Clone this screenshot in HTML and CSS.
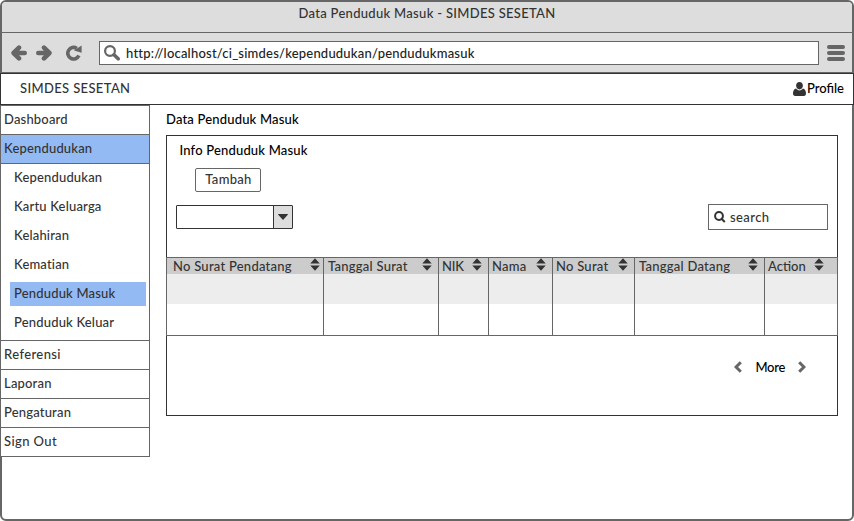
FILE: index.html
```html
<!DOCTYPE html>
<html lang="id">
<head>
<meta charset="utf-8">
<title>Data Penduduk Masuk - SIMDES SESETAN</title>
<link rel="stylesheet" href="styles.css">
</head>
<body>
<svg class="defs" width="0" height="0" aria-hidden="true">
  <symbol id="sort" viewBox="0 0 10 13"><path d="M5 0.3 9.7 5.6H0.3zM0.3 7.4H9.7L5 12.7z"/></symbol>
</svg>
<div class="window">
  <div class="titlebar">Data Penduduk Masuk - SIMDES SESETAN</div>
  <div class="toolbar">
    <svg class="nav-back" width="16" height="16" viewBox="0 0 16 16"><path d="M8 2.600 2.600 8l5.400 5.400M3 8h10.700"/></svg>
    <svg class="nav-forward" width="16" height="16" viewBox="0 0 16 16"><path d="M8 2.600 13.400 8l-5.400 5.400M13 8H2.300"/></svg>
    <svg class="nav-reload" width="17" height="16" viewBox="0 0 17 16"><path d="M11.800 3.400A5.800 5.800 0 1 0 13.900 10.600"/><path class="head" d="M16.600 0.600V7.800L9 5.600z"/></svg>
    <div class="address">
      <svg width="17" height="16" viewBox="0 0 17 16"><circle cx="6" cy="6" r="4.9"/><path d="M10 9.800 14.200 13.800"/></svg>
      <span class="url">http://localhost/ci_simdes/kependudukan/pendudukmasuk</span>
    </div>
    <div class="burger"><i></i><i></i><i></i></div>
  </div>
  <header class="header">
    <span class="brand">SIMDES SESETAN</span>
    <span class="profile"><svg width="13" height="14" viewBox="0 0 13 14"><path d="M6.5 0C8.6 0 9.9 1.5 9.9 3.6S8.500 7.500 6.500 7.500 3.100 5.700 3.100 3.600 4.400 0 6.500 0zM3.100 6.600C4 7.800 5 8.400 6.500 8.400S9 7.800 9.900 6.600C12 7 13 9 13 11.500 13 13 12.200 14 10.900 14H2.100C.8 14 0 13 0 11.500 0 9 1 7 3.100 6.600z"/></svg><span>Profile</span></span>
  </header>
  <div class="content">
    <nav class="sidebar">
      <a class="item">Dashboard</a>
      <a class="item active">Kependudukan</a>
      <div class="submenu">
        <a class="sub">Kependudukan</a>
        <a class="sub">Kartu Keluarga</a>
        <a class="sub">Kelahiran</a>
        <a class="sub">Kematian</a>
        <a class="sub selected">Penduduk Masuk</a>
        <a class="sub">Penduduk Keluar</a>
      </div>
      <a class="item wide">Referensi</a>
      <a class="item">Laporan</a>
      <a class="item">Pengaturan</a>
      <a class="item wide">Sign Out</a>
    </nav>
    <main class="main">
      <h1>Data Penduduk Masuk</h1>
      <section class="panel">
        <h2>Info Penduduk Masuk</h2>
        <button class="add">Tambah</button>
        <div class="filters">
          <div class="select"><span class="arrow"><svg width="10" height="6" viewBox="0 0 10 6"><path d="M0.500 0H9.500L10 .6 5 6 0 .6z"/></svg></span></div>
          <div class="search"><svg width="12" height="12" viewBox="0 0 12 12"><circle cx="5" cy="5" r="3.900"/><path d="M7 7.300 10.800 11"/></svg><span>search</span></div>
        </div>
        <div class="table">
          <div class="col"><div class="th"><span>No Surat Pendatang</span><svg><use href="#sort"/></svg></div></div>
          <div class="col"><div class="th"><span>Tanggal Surat</span><svg><use href="#sort"/></svg></div></div>
          <div class="col"><div class="th"><span>NIK</span><svg><use href="#sort"/></svg></div></div>
          <div class="col"><div class="th"><span>Nama</span><svg><use href="#sort"/></svg></div></div>
          <div class="col"><div class="th"><span>No Surat</span><svg><use href="#sort"/></svg></div></div>
          <div class="col"><div class="th"><span>Tanggal Datang</span><svg><use href="#sort"/></svg></div></div>
          <div class="col"><div class="th"><span>Action</span><svg><use href="#sort"/></svg></div></div>
        </div>
        <div class="pager">
          <svg width="8" height="12" viewBox="0 0 8 12"><path d="M6.800 1.200 2 6l4.800 4.800"/></svg>
          <span>More</span>
          <svg width="8" height="12" viewBox="0 0 8 12"><path d="M1.200 1.200 6 6l-4.800 4.800"/></svg>
        </div>
      </section>
    </main>
  </div>
</div>
</body>
</html>
```
FILE: styles.css
```css
* { box-sizing: border-box; }
body {
  margin: 0;
  background: #fff;
  color: #333;
  font: 500 13px/16px Lato, "Liberation Sans", sans-serif;
  letter-spacing: 0.18px;
  white-space: nowrap;
}
.defs { position: absolute; }
svg { display: block; flex: none; }
.window {
  width: 854px;
  height: 521px;
  border: 2px solid #666;
  border-radius: 6px;
  background: #fff;
}
.titlebar {
  height: 31px;
  padding-top: 3px;
  border-bottom: 1px solid #666;
  border-radius: 4px 4px 0 0;
  background: #ddd;
  text-align: center;
  letter-spacing: 0.3px;
}
.toolbar {
  display: flex;
  align-items: center;
  height: 40px;
  padding: 0 7px 0 9px;
  border-bottom: 1px solid #666;
  background: #ddd;
}
.toolbar > svg { fill: none; stroke: #666; stroke-width: 4.600; }
.nav-back, .nav-forward { stroke-linejoin: round; stroke-linecap: round; }
.nav-forward { margin-left: 9px; }
.nav-reload { margin-left: 13px; }
.toolbar > .nav-reload { stroke-width: 3.600; }
.nav-reload .head { fill: #666; stroke: none; }
.address {
  display: flex;
  align-items: center;
  width: 720px;
  height: 24px;
  margin-left: 17px;
  padding-left: 4px;
  border: 1px solid #666;
  background: #fff;
}
.address svg { fill: none; stroke: #666; stroke-width: 2.200; }
.address path { stroke-width: 3.600; stroke-linecap: round; }
.url { margin-left: 5px; color: #222; letter-spacing: 0.21px; }
.burger { display: grid; gap: 2px; width: 18px; margin-left: 8px; }
.burger i { height: 4px; border-radius: 2px; background: #666; }
.header {
  display: flex;
  justify-content: space-between;
  align-items: center;
  height: 32px;
  margin: 0 -2px;
  padding: 0 9px 2px 19px;
  border: 1px solid #333;
  background: #fff;
}
.brand { letter-spacing: 0.36px; }
.profile { display: flex; align-items: center; gap: 1px; color: #000; letter-spacing: 0; }
.profile svg { fill: #333; margin-top: 2px; }
.content { display: flex; align-items: flex-start; }
.sidebar {
  width: 150px;
  margin-left: -2px;
  border: 1px solid #666;
  background: #fff;
}
.item {
  display: block;
  height: 29px;
  padding: 5px 0 0 3px;
  border-bottom: 1px solid #666;
}
.item:last-child { border-bottom: 0; height: 28px; }
.wide { letter-spacing: 0.4px; }
.active { background: #94baf3; }
.submenu {
  display: grid;
  gap: 5px;
  height: 177px;
  align-content: start;
  padding: 2px 3px 0 9px;
  border-bottom: 1px solid #666;
}
.sub { height: 24px; padding: 3px 0 0 4px; }
.selected { background: #94baf3; }
.main { width: 672px; margin-left: 16px; color: #000; }
h1, h2 { margin: 0; font: inherit; }
h1 { padding-top: 6px; height: 30px; }
.panel { height: 281px; border: 1px solid #333; }
h2 { height: 32px; padding: 6px 0 0 12.500px; }
.add {
  display: block;
  width: 66px;
  height: 24px;
  margin-left: 28px;
  padding: 0 0 2px 1px;
  border: 1px solid #666;
  border-radius: 2px;
  background: #fff;
  color: #333;
  font: inherit;
  letter-spacing: 0.3px;
}
.filters {
  display: flex;
  justify-content: space-between;
  align-items: center;
  margin: 12px 9px 0;
}
.select {
  display: flex;
  justify-content: flex-end;
  width: 117px;
  height: 24px;
  border: 1px solid #333;
  border-radius: 1px;
}
.arrow {
  display: grid;
  place-items: center;
  width: 19px;
  border-left: 1px solid #333;
  background: #ddd;
}
.arrow svg { fill: #333; }
.search {
  display: flex;
  align-items: center;
  gap: 4px;
  width: 120px;
  height: 26px;
  padding: 0 0 1px 5px;
  border: 1px solid #666;
  color: #333;
  letter-spacing: 0.4px;
}
.search svg { fill: none; stroke: #333; stroke-width: 2; }
.table {
  display: grid;
  grid-template-columns: 158px 115px 50px 64px 82px 130px 73px;
  height: 79px;
  margin: 27px -1px 0;
  border-top: 1px solid #666;
  border-bottom: 1px solid #666;
  background: linear-gradient(#ccc 16px, #ededed 16px 46px, #fff 46px);
  color: #333;
}
.col { border-right: 1px solid #666; }
.col:first-child { border-left: 1px solid #666; }
.th { display: flex; justify-content: space-between; height: 16px; padding: 0 6px 0 3px; letter-spacing: 0.25px; }
.col:nth-child(2) .th, .col:nth-child(6) .th { padding-left: 4px; }
.col:nth-child(3) .th { letter-spacing: -0.2px; }
.th svg { width: 10px; height: 13px; fill: #333; }
.col:first-child .th { padding: 0 3px 0 6px; }
.col:last-child .th { padding-right: 13px; letter-spacing: 0; }
.pager {
  display: flex;
  align-items: center;
  justify-content: flex-end;
  gap: 13px;
  margin: 23px 31px 0 0;
  letter-spacing: -0.300px;
}
.pager svg { fill: none; stroke: #666; stroke-width: 3; }
```
